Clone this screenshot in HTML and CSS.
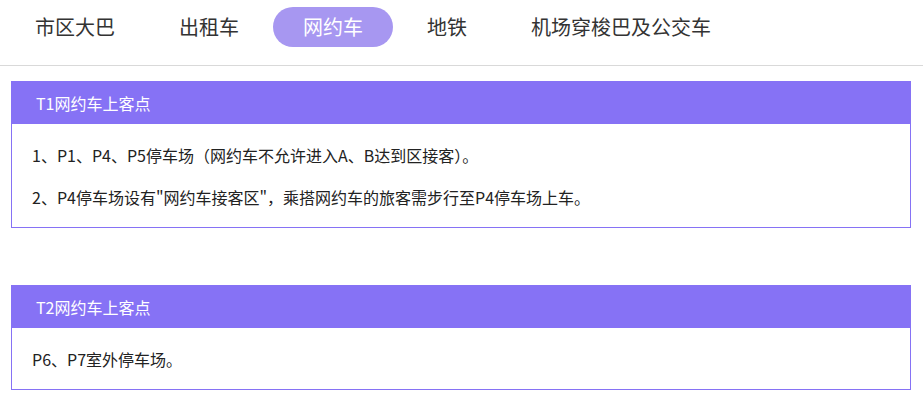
FILE: index.html
```html
<!DOCTYPE html>
<html lang="zh-CN">
<head>
    <meta charset="UTF-8">
    <meta name="viewport" content="width=device-width, initial-scale=1.0">
    <title>网约车</title>
    <link rel="stylesheet" href="styles.css">
</head>
<body>
    <div class="tabs">
        <a class="tab">市区大巴</a>
        <a class="tab">出租车</a>
        <a class="tab active">网约车</a>
        <a class="tab">地铁</a>
        <a class="tab">机场穿梭巴及公交车</a>
    </div>

    <div class="content">
        <div class="card">
            <div class="card-title">T1网约车上客点</div>
            <div class="card-body">
                <p>1、P1、P4、P5停车场（网约车不允许进入A、B达到区接客）。</p>
                <p>2、P4停车场设有"网约车接客区"，乘搭网约车的旅客需步行至P4停车场上车。</p>
            </div>
        </div>

        <div class="card">
            <div class="card-title">T2网约车上客点</div>
            <div class="card-body">
                <p>P6、P7室外停车场。</p>
            </div>
        </div>
    </div>
</body>
</html>
```

FILE: styles.css
```css
* {
    margin: 0;
    padding: 0;
    box-sizing: border-box;
}

body {
    font-family: "Noto Sans CJK SC", "Microsoft YaHei", sans-serif;
    background: #fff;
    color: #333;
}

.tabs {
    display: flex;
    gap: 4px;
    height: 66px;
    padding: 7px 0 0 5px;
    border-bottom: 1px solid #d9d9d9;
}

.tab {
    height: 40px;
    line-height: 40px;
    padding: 0 30px;
    font-size: 20px;
    color: #333;
    border-radius: 20px;
    cursor: pointer;
}

.tab.active {
    background: #a797f1;
    color: #fff;
}

.content {
    padding: 15px 12px 0 11px;
}

.card {
    width: 900px;
    border: 1px solid #8672f5;
    margin-bottom: 57px;
}

.card:last-child {
    margin-bottom: 0;
}

.card-title {
    height: 42px;
    line-height: 42px;
    padding-left: 24px;
    background: #8672f5;
    color: #fff;
    font-size: 16px;
}

.card-body {
    padding: 19px 20px 0;
}

.card-body p {
    font-size: 16px;
    line-height: 24px;
    margin-bottom: 18px;
    color: #222;
}
```
